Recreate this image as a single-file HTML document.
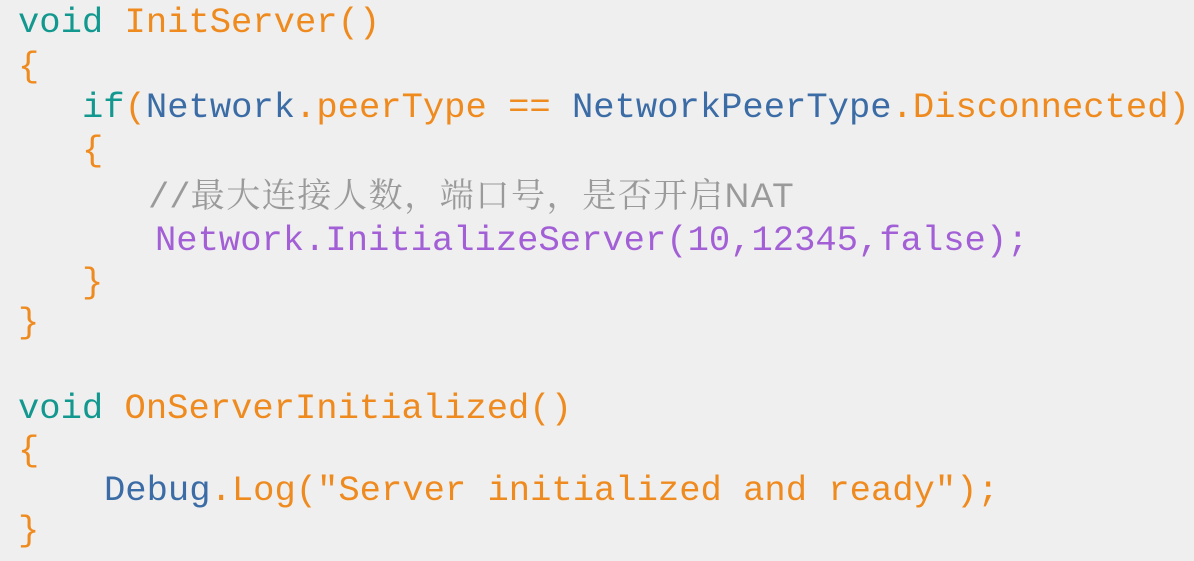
<!DOCTYPE html><html><head><meta charset="utf-8"><style>
body{margin:0;width:1194px;height:561px;overflow:hidden;background:#efefef;font-family:"Liberation Mono",monospace;font-size:35.5px;}
.l{position:absolute;height:40px;line-height:40px;white-space:pre;}
.t{color:#12988f}.o{color:#ef8a1e}.b{color:#3b6ca6}.p{color:#a35fd6}.g{color:#9a9a9a;font-family:"Liberation Sans","Noto Serif CJK SC",serif;font-size:34px;letter-spacing:1.6px}
.g .s{font-family:"Liberation Mono",monospace;font-size:35.5px;letter-spacing:0}
</style></head><body>
<div class="l" style="left:18px;top:3px"><span class="t">void</span> <span class="o">InitServer()</span></div>
<div class="l o" style="left:18px;top:47px">{</div>
<div class="l" style="left:82px;top:88px"><span class="t">if</span><span class="o">(</span><span class="b">Network</span><span class="o">.peerType == </span><span class="b">NetworkPeerType</span><span class="o">.Disconnected)</span></div>
<div class="l o" style="left:82px;top:131px">{</div>
<div class="l g" style="left:148px;top:176px"><span class="s">//</span>最大连接人数，端口号，是否开启NAT</div>
<div class="l p" style="left:155px;top:221px">Network.InitializeServer(10,12345,false);</div>
<div class="l o" style="left:82px;top:263px">}</div>
<div class="l o" style="left:18px;top:303px">}</div>
<div class="l" style="left:18px;top:389px"><span class="t">void</span> <span class="o">OnServerInitialized()</span></div>
<div class="l o" style="left:18px;top:431px">{</div>
<div class="l" style="left:104px;top:471px"><span class="b">Debug</span><span class="o">.Log("Server initialized and ready");</span></div>
<div class="l o" style="left:18px;top:511px">}</div>
</body></html>
